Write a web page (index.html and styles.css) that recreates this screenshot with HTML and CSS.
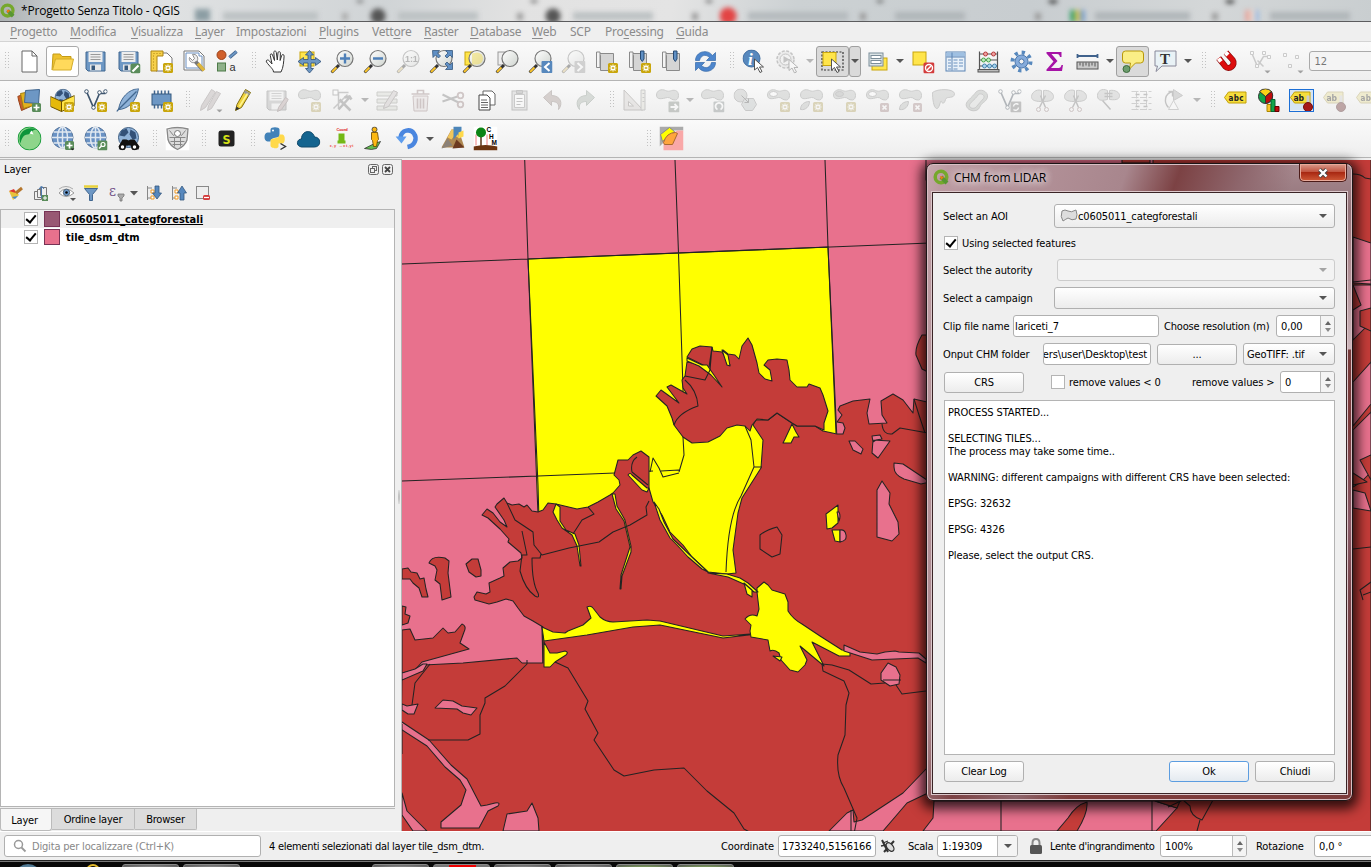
FILE: index.html
```html
<!DOCTYPE html>
<html lang="it">
<head>
<meta charset="utf-8">
<title>*Progetto Senza Titolo - QGIS</title>
<link rel="stylesheet" href="styles.css">
</head>
<body>
<svg class="defs" aria-hidden="true">
<defs>
<linearGradient id="gy" x1="0" y1="0" x2="0" y2="1"><stop offset="0" stop-color="#fff3a0"/><stop offset="1" stop-color="#f6dc3c"/></linearGradient>
<linearGradient id="gl" x1="0" y1="0" x2="1" y2="1"><stop offset="0" stop-color="#fff"/><stop offset="1" stop-color="#cfd4cf"/></linearGradient>
<g id="star"><rect x="13.500" y="13.500" width="10" height="10" rx="1.500" fill="#c9a60c"/><path d="M18.500 15v7M15 18.500h7M16 16l5 5M21 16l-5 5" stroke="#fff" stroke-width="1.100"/><circle cx="18.500" cy="18.500" r="1" fill="#c9a60c"/></g>
<g id="plus"><rect x="14.500" y="14.500" width="9" height="9" rx="1.500" fill="#5a8c5a"/><path d="M19 16v6M16 19h6" stroke="#fff" stroke-width="1.700"/></g>
<g id="cross"><rect x="14.500" y="14.500" width="9" height="9" rx="1.500" fill="#c08080"/><path d="M17 17l4 4M21 17l-4 4" stroke="#fff" stroke-width="1.700"/></g>
<g id="lens"><path d="M8.500 15.500L1 23" stroke="#333" stroke-width="3"/><path d="M6 18l-4.500 4.500" stroke="#fcc62c" stroke-width="2"/><circle cx="14.500" cy="9" r="8" fill="url(#gl)" stroke="#777" stroke-width="1.200"/></g>
<g id="disk"><path d="M2.500 2.500h19v19h-17l-2-2z" fill="#6d97c4" stroke="#41668f"/><rect x="5" y="2.500" width="14" height="10" fill="#eee"/><path d="M7 5h10M7 7.500h10M7 10h10" stroke="#999"/><rect x="6.500" y="15" width="11" height="6" fill="#e8e8e8"/><rect x="8" y="16" width="3.500" height="4.500" fill="#37587c"/></g>
<g id="blob"><path d="M1 6.500C1 2 6 0 10 2c4 2 6-1 10 0 4 1 4 9 0 9.500-4 .5-5-3-8-2.500C7 10 1 12 1 6.500z" fill="#b9beb9" stroke="#888c88"/></g>
<g id="cursor"><path d="M0 0v11l3-2.500 2.500 5 2-1-2.500-4.500h4z" fill="#fff" stroke="#444" stroke-width=".9"/></g>
<g id="globe"><circle cx="12" cy="11" r="10.500" fill="#6a92c4" stroke="#54749b"/><path d="M3 5.500h18M1.500 11h21M3 16.500h18M12 .5v21" stroke="#dfe7f0" stroke-width="1.500"/><ellipse cx="12" cy="11" rx="5" ry="10.500" fill="none" stroke="#dfe7f0" stroke-width="1.500"/></g>
<g id="world"><circle cx="12" cy="11" r="10" fill="#8fb2d8" stroke="#3d5d80"/><path d="M5 4l5-2 2 4-4 4-5-1zM14 3l5 3 1 6-4 1-3-5zM7 13l5 1-1 6z" fill="#335178"/></g>
<g id="book"><path d="M3 4h16v17H6V6z" fill="#d5d5d5" stroke="#8a8a8a"/><path d="M2 2.500h3.500v15.500H2z" fill="#f4f4f4" stroke="#8a8a8a"/></g>
<g id="q"><circle cx="8" cy="8" r="5.800" fill="none" stroke="#75a82c" stroke-width="3.500"/><path d="M8 8l6 6" stroke="#589632" stroke-width="4"/><path d="M7 7l4 1-3 3z" fill="#ee7913"/></g>
</defs>
<symbol id="new" viewBox="0 0 24 24"><path d="M4.500 1.500h10l5 5v16h-15z" fill="#fff" stroke="#666"/><path d="M14.500 1.500v5h5" fill="none" stroke="#666"/></symbol>
<symbol id="open" viewBox="0 0 24 24"><path d="M1.500 20.500l1-16h7l2 2.500h9v3" fill="#eec22e" stroke="#c49b16"/><path d="M2 20.500l3-11h18l-2.500 11z" fill="#ffd95b" stroke="#d4ad2b"/></symbol>
<symbol id="save" viewBox="0 0 24 24"><use href="#disk"/></symbol>
<symbol id="saveas" viewBox="0 0 24 24"><use href="#disk"/><rect x="14" y="14" width="10" height="10" rx="2" fill="#5a8c5a"/><path d="M16 22l6-6" stroke="#fff" stroke-width="2.200"/></symbol>
<symbol id="layout" viewBox="0 0 24 24"><path d="M6.500 3.500h11l5 5v13h-16z" fill="#fff" stroke="#777"/><path d="M1.500 1.500h12v5h-6v15h-6z" fill="#f6d04a" stroke="#ad8512"/><path d="M4 6v14M4 4h8" stroke="#ad8512" stroke-dasharray="1 2"/><use href="#star"/></symbol>
<symbol id="layman" viewBox="0 0 24 24"><path d="M1.500 1.500h15l5 5v14h-20z" fill="#fff" stroke="#777"/><path d="M3.500 3.500h13v3h3v12h-16z" fill="none" stroke="#6a8fc0"/><path d="M12 11l9 10" stroke="#777" stroke-width="4"/><path d="M15.500 14l6 7" stroke="#dfb63c" stroke-width="3.400"/><path d="M7 8l3 3 2-2-2-4c4-1 6 3 5 6l-3 2c-3 1-6-2-5-5z" fill="#eee" stroke="#777" stroke-width=".8"/></symbol>
<symbol id="style" viewBox="0 0 24 24"><circle cx="6" cy="5.500" r="4.500" fill="#d0602b" stroke="#9c4219"/><path d="M14 8l7-6" stroke="#3d5f88" stroke-width="3.600"/><path d="M14 8l7-6" stroke="#6d97c4" stroke-width="2"/><rect x="2" y="13.500" width="8" height="8" fill="#8fb18a" stroke="#4d7a48"/><text x="14" y="21" font-family="Liberation Sans" font-size="11" fill="#333">a</text></symbol>
<symbol id="pan" viewBox="0 0 24 24"><path d="M9 22.500c0-3-4-5.500-7-10-1-2 1.500-2.800 3-1l2.500 3L5.800 6c-.3-2 1.700-2.300 2.200-.5l2 5.500L9.300 3c0-2 2.300-2 2.500 0l1 7.500L13.500 3.300c.2-1.800 2.400-1.500 2.400.3L15.600 11l1.600-5c.5-1.600 2.600-1.100 2.400.7-.5 6-.6 11-3.100 15.800z" fill="#fff" stroke="#333"/></symbol>
<symbol id="pansel" viewBox="0 0 24 24"><rect x="2.500" y="2.500" width="14" height="14" fill="#ffe54b" stroke="#c9a60c"/><path d="M12 1l4 4.500h-2.500V10H18V8l5.500 4-5.500 4v-2.500h-4.500V19H16l-4 4.500L8 19h2.500v-5.500H6V16L.5 12 6 8v2h4.500V5.500H8z" fill="#6d97c4" stroke="#2f5179" stroke-width=".8"/></symbol>
<symbol id="zin" viewBox="0 0 24 24"><use href="#lens"/><path d="M14.500 4v10M9.500 9h10" stroke="#4f80b8" stroke-width="2.400"/></symbol>
<symbol id="zout" viewBox="0 0 24 24"><use href="#lens"/><path d="M9.500 9h10" stroke="#4f80b8" stroke-width="2.400"/></symbol>
<symbol id="z11" viewBox="0 0 24 24"><use href="#lens"/><text x="8.500" y="12.500" font-family="Liberation Sans" font-size="9" font-weight="bold" fill="#555">1:1</text></symbol>
<symbol id="zfull" viewBox="0 0 24 24"><use href="#lens"/><path d="M3 1h7L8 3.500l3 3-2 2-3-3L3.500 8zM23 1h-7l2.500 2.500-3 3 2 2 3-3L23 8zM23 20h-7l2.500-2.500-3-3 2-2 3 3L23 13z" fill="#5f8fc4" stroke="#35587f" stroke-width=".8"/></symbol>
<symbol id="zsel" viewBox="0 0 24 24"><rect x="2.500" y="2.500" width="12" height="13" fill="#ffe54b" stroke="#c9a60c"/><use href="#lens"/><path d="M14.500 3a6 6 0 010 12h-5V4z" fill="#f1e06c" opacity=".6"/></symbol>
<symbol id="zlay" viewBox="0 0 24 24"><rect x="2.500" y="2.500" width="12" height="13" fill="#eee" stroke="#999"/><use href="#lens"/></symbol>
<symbol id="zlast" viewBox="0 0 24 24"><use href="#lens"/><rect x="13" y="11.500" width="11" height="12" rx="1" fill="#5788bd"/><path d="M21 13.500l-4.500 4 4.500 4" fill="none" stroke="#fff" stroke-width="2"/></symbol>
<symbol id="znext" viewBox="0 0 24 24"><use href="#lens"/><rect x="13" y="11.500" width="11" height="12" rx="1" fill="#999"/><path d="M16 13.500l4.500 4-4.500 4" fill="none" stroke="#fff" stroke-width="2"/></symbol>
<symbol id="bm1" viewBox="0 0 24 24"><use href="#book"/><use href="#star"/></symbol>
<symbol id="bm2" viewBox="0 0 24 24"><use href="#book"/><path d="M13 1.500h3.500v8l-1.700 2.500-1.800-2.500z" fill="#5f8fc4" stroke="#274a73"/><use href="#star"/></symbol>
<symbol id="bm3" viewBox="0 0 24 24"><use href="#book"/><path d="M13 1.500h3.500v8l-1.700 2.500-1.800-2.500z" fill="#5f8fc4" stroke="#274a73"/></symbol>
<symbol id="refresh" viewBox="0 0 24 24"><path d="M2 11c0-9 12-12 17-5l3-3v8h-9l3-3c-4-4-9-2-10 3z" fill="#4d86cd" stroke="#3568a8" stroke-width=".7"/><path d="M22 13c0 9-12 12-17 5l-3 3v-8h9l-3 3c4 4 9 2 10-3z" fill="#4d86cd" stroke="#3568a8" stroke-width=".7"/></symbol>
<symbol id="info" viewBox="0 0 24 24"><circle cx="9" cy="9" r="8.500" fill="#5788bd" stroke="#3f6ca0"/><text x="5.500" y="15" font-family="Liberation Serif" font-size="17" font-style="italic" font-weight="bold" fill="#fff">i</text><use href="#cursor" transform="translate(12 9.500)"/></symbol>
<symbol id="act" viewBox="0 0 24 24"><circle cx="10" cy="10" r="8.500" fill="#ddd" stroke="#777" stroke-width="1.500" stroke-dasharray="3 1.500"/><circle cx="10" cy="10" r="5.500" fill="#eee" stroke="#777"/><path d="M8 6.500l6 3.500-6 3.500z" fill="#777"/><use href="#cursor" transform="translate(13.500 10)"/></symbol>
<symbol id="select" viewBox="0 0 24 24"><rect x="1.500" y="2.500" width="21" height="18" fill="none" stroke="#333" stroke-width="1.200" stroke-dasharray="2 1.500"/><rect x="2.500" y="3" width="13" height="13" fill="#ffe54b" stroke="#c9a60c"/><use href="#cursor" transform="translate(11 9.500)"/></symbol>
<symbol id="form" viewBox="0 0 24 24"><rect x="6.500" y="8.500" width="15" height="12" fill="#ffe54b" stroke="#c9a60c"/><rect x="3.500" y="3.500" width="14" height="13" fill="#dce4e6" stroke="#7b8d99"/><rect x="5.500" y="6" width="10" height="3" fill="#fff" stroke="#7b8d99"/><rect x="5.500" y="11" width="10" height="3" fill="#fff" stroke="#7b8d99"/></symbol>
<symbol id="desel" viewBox="0 0 24 24"><rect x="2.500" y="2.500" width="13" height="13" fill="#ffe54b" stroke="#c9a60c"/><rect x="13" y="13" width="11" height="11" rx="1.500" fill="#d33c3c"/><circle cx="18.500" cy="18.500" r="3.500" fill="none" stroke="#fff" stroke-width="1.400"/><path d="M16.500 20.500l4-4" stroke="#fff" stroke-width="1.400"/></symbol>
<symbol id="table" viewBox="0 0 24 24"><rect x="2.500" y="2.500" width="19" height="19" fill="#e9f1f9" stroke="#5a83b3"/><path d="M3 3h18v4H3z" fill="#9fc0e2"/><path d="M3 7.500h18M8.500 3v18" stroke="#5a83b3"/><path d="M4.500 10.500h3M10 10.500h4M15.500 10.500h4M4.500 13.500h3M10 13.500h4M15.500 13.500h4M4.500 16.500h3M10 16.500h4M15.500 16.500h4M4.500 19.500h3M10 19.500h4" stroke="#6a92c0" stroke-width="1.200"/></symbol>
<symbol id="abacus" viewBox="0 0 24 24"><path d="M3 2v19M21 2v19M3 4.500h18M3 10.500h18M3 16.500h18" stroke="#555" fill="none" stroke-width="1.200"/><rect x="1.500" y="20" width="21" height="2.500" fill="#bbb" stroke="#555"/><g stroke-width=".9"><g fill="#f0a0a0" stroke="#b03030"><circle cx="9" cy="4.500" r="2"/><circle cx="17" cy="4.500" r="2"/></g><g fill="#bdeebd" stroke="#3d9a3d"><circle cx="7" cy="10.500" r="2"/><circle cx="12" cy="10.500" r="2"/></g><g fill="#a8d4ee" stroke="#3a7ba8"><circle cx="8" cy="16.500" r="2"/><circle cx="13" cy="16.500" r="2"/><circle cx="18" cy="16.500" r="2"/></g></g></symbol>
<symbol id="gear" viewBox="0 0 24 24"><circle cx="12" cy="12" r="9" fill="none" stroke="#5788bd" stroke-width="4" stroke-dasharray="3.200 3.850"/><circle cx="12" cy="12" r="6.500" fill="#85abdb" stroke="#4d79ae"/><circle cx="12" cy="12" r="2.500" fill="#f2f2f2" stroke="#4d79ae"/></symbol>
<symbol id="sigma" viewBox="0 0 24 24"><path d="M4 2.500h15v5h-1.500c-.5-2-1-3-3-3H9l6 7-6.500 7H16c2 0 2.500-1 3-3h1.500l-1 6H4V20l7-8-7-8z" fill="#a613a6"/></symbol>
<symbol id="measure" viewBox="0 0 24 24"><path d="M2 6.500h20M2 4.500v4M22 4.500v4" stroke="#40628c" stroke-width="1.800"/><rect x="1.500" y="12.500" width="21" height="7" fill="#c9c9c9" stroke="#555"/><path d="M4.500 13v3M7.500 13v4M10.500 13v3M13.500 13v4M16.500 13v3M19.500 13v4" stroke="#555"/></symbol>
<symbol id="tip" viewBox="0 0 24 24"><path d="M5 1.500h15q3 0 3 3v6q0 3-3 3h-5l-6 6 1-6H5q-3 0-3-3v-6q0-3 3-3z" fill="#fbee86" stroke="#b8980a"/><circle cx="6" cy="19.500" r="3.500" fill="#6d9d6d" stroke="#3d6b3d"/></symbol>
<symbol id="textann" viewBox="0 0 24 24"><path d="M1.500 1.500h21v15h-14l-6 5.500 1.500-5.500H1.500z" fill="#e9f2f6" stroke="#889"/><text x="6.500" y="14" font-family="Liberation Serif" font-size="15" font-weight="bold" fill="#333">T</text></symbol>
<symbol id="magnet" viewBox="0 0 24 24"><path d="M4 9l7 8c4 4 11-2 7-7l-7-7" transform="rotate(3 12 12)" fill="none" stroke="#8b0d0d" stroke-width="6"/><path d="M4 9l7 8c4 4 11-2 7-7l-7-7" transform="rotate(3 12 12)" fill="none" stroke="#dd0d0d" stroke-width="4.600"/><path d="M4 9l2.500 3M11 3l2.500 2.500" stroke="#fff" stroke-width="4.200"/></symbol>
<symbol id="vee" viewBox="0 0 24 24"><path d="M3 3l7 16 6-14h6" fill="none" stroke="#3e556e" stroke-width="1.700"/><g fill="#fff" stroke="#3e556e"><circle cx="3" cy="3" r="1.800"/><circle cx="10" cy="19" r="1.800"/><circle cx="16" cy="4" r="1.800"/><circle cx="22" cy="3" r="1.800"/></g></symbol>
<symbol id="snapv" viewBox="0 0 24 24"><path d="M4 3l6 14 6-10h6M10 11l6 6" fill="none" stroke="#888" stroke-width="1.500"/><path d="M3 2h3v3H3zM15 2h3v3h-3zM20 6h3v3h-3zM8 15h3v3H8z" fill="#fff" stroke="#888"/><path d="M17 21h6l-3 3z" fill="#222"/></symbol>
<symbol id="dots" viewBox="0 0 24 24"><path d="M3 4h3v3H3zM15 6h3v3h-3zM8 15h3v3H8z" fill="#fff" stroke="#888"/><path d="M17 21h6l-3 3z" fill="#222"/></symbol>
<symbol id="src" viewBox="0 0 24 24"><path d="M0 8l8-3 5 13-9 4z" fill="#c9602b" stroke="#96401a"/><path d="M3 5l10-2 3 14-10 3z" fill="#e2b11e" stroke="#a5800f"/><path d="M8 2l14-1-1 14-14-1z" fill="#6d97c4" stroke="#41668f"/><use href="#plus"/></symbol>
<symbol id="gpkg" viewBox="0 0 24 24"><use href="#world" transform="translate(3 0) scale(.8)"/><path d="M0 8l11 5v10L0 18z" fill="#e5b90c" stroke="#6b5200"/><path d="M24 7l-13 6v10l13-6z" fill="#ffe54b" stroke="#6b5200"/><use href="#star"/></symbol>
<symbol id="shp" viewBox="0 0 24 24"><use href="#vee"/><use href="#star"/></symbol>
<symbol id="spat" viewBox="0 0 24 24"><path d="M22 0C12 1 4 9 2 21c8 0 18-7 20-21z" fill="#8fb2d8" stroke="#41668f"/><path d="M20 3L0 23" stroke="#41668f" stroke-width="1.200"/><use href="#star"/></symbol>
<symbol id="mem" viewBox="0 0 24 24"><path d="M5 2v18M8.500 2v18M12 2v18M15.500 2v18M19 2v18" stroke="#41668f" stroke-width="1.500"/><rect x="2.500" y="5.500" width="19" height="11" fill="#6d97c4" stroke="#35587f"/><use href="#star"/></symbol>
<symbol id="pens" viewBox="0 0 24 24"><path d="M2 22l1-5L13 1l4 2.500L7 19zM9 22l1-5L18 3l4 2-9 15z" fill="#bba5a5" stroke="#8c7c7c"/><path d="M18 21h6l-3 3z" fill="#222"/></symbol>
<symbol id="pen" viewBox="0 0 24 24"><path d="M4 22l1.500-6L14 1l5 3-9 15z" fill="#efd23c" stroke="#7d6a10"/><path d="M13 3l5 3" stroke="#999" stroke-width="3"/><path d="M16 5L8 18" stroke="#fff48f" stroke-width="1.500"/><path d="M4 22l1-4 3 2z" fill="#333"/></symbol>
<symbol id="savee" viewBox="0 0 24 24"><path d="M2.500 2.500h19v19h-17l-2-2z" fill="#aaa" stroke="#777"/><path d="M5 3h14v9H5zM7 15h10v6H7z" fill="#eee"/><path d="M7 5h10M7 7.500h10M7 10h10" stroke="#999"/><path d="M13 23l1-4 7-10 3 2-7 10z" fill="#c79b9b" stroke="#866"/></symbol>
<symbol id="bstar" viewBox="0 0 24 24"><use href="#blob"/><use href="#star"/></symbol>
<symbol id="ring" viewBox="0 0 24 24"><use href="#blob"/><ellipse cx="7" cy="5.500" rx="4" ry="2.500" fill="#fff" stroke="#888"/><use href="#star"/></symbol>
<symbol id="ringf" viewBox="0 0 24 24"><use href="#blob"/><ellipse cx="7" cy="5.500" rx="4" ry="2.500" fill="#a5aaa5" stroke="#888"/><use href="#star"/></symbol>
<symbol id="ringx" viewBox="0 0 24 24"><use href="#blob"/><ellipse cx="7" cy="5.500" rx="4" ry="2.500" fill="#fff" stroke="#888"/><use href="#cross"/></symbol>
<symbol id="part" viewBox="0 0 24 24"><use href="#blob"/><path d="M1 21c0-5 4-8 9-8 0 5-4 9-9 8z" fill="#b9beb9" stroke="#888"/><use href="#star"/></symbol>
<symbol id="partx" viewBox="0 0 24 24"><use href="#blob"/><path d="M1 21c0-5 4-8 9-8 0 5-4 9-9 8z" fill="#b9beb9" stroke="#888"/><use href="#cross"/></symbol>
<symbol id="move" viewBox="0 0 24 24"><use href="#blob"/><rect x="13" y="13" width="11" height="11" rx="1" fill="#7a8a7a"/><path d="M15 18.500h7M19 15.500l3 3-3 3" fill="none" stroke="#fff" stroke-width="1.800"/></symbol>
<symbol id="rot" viewBox="0 0 24 24"><use href="#blob"/><rect x="13" y="13" width="11" height="11" rx="1" fill="#7a8a8a"/><path d="M17 21a3.500 3.500 0 113 0" fill="none" stroke="#fff" stroke-width="1.800"/></symbol>
<symbol id="simp" viewBox="0 0 24 24"><circle cx="7" cy="7" r="6.500" fill="#b9beb9" stroke="#888"/><path d="M11 10h9l3 6-4 6h-7l-4-6z" fill="#b9c4c4" stroke="#888"/><path d="M8 7l7 7m0-4v4h-4" fill="none" stroke="#555"/></symbol>
<symbol id="resh" viewBox="0 0 24 24"><path d="M1 4c5-4 21-4 22 1 0 6-8 2-9 6s-3 5-4 2-2 8-5 7S1 10 1 4z" fill="#b9beb9" stroke="#888"/></symbol>
<symbol id="offs" viewBox="0 0 24 24"><path d="M12 3c6-4 14 2 10 8-3 4-4 2-7 8-2 5-11 4-13-1S7 10 12 3z" fill="#aab5aa" stroke="#888"/><path d="M14 6c3-2 7 1 5 4l-7 8c-2 3-7 2-7-1s5-5 9-11z" fill="#d5dad5" stroke="#888"/></symbol>
<symbol id="vtx" viewBox="0 0 24 24"><path d="M3 4h5m0 0v16M8 4l10 0M3 20L17 6" fill="none" stroke="#888" stroke-width="1.500"/><rect x="2.500" y="1.500" width="5" height="5" fill="#fff" stroke="#777"/><path d="M9 11l11 11M19 9l-11 12M14 9l5-1 2 3" stroke="#777" stroke-width="2.500" fill="none"/></symbol>
<symbol id="rows" viewBox="0 0 24 24"><path d="M1.500 3.500h20v4h-20zM1.500 10.500h20v4h-20zM1.500 17.500h20v4h-20z" fill="#d4d8c8" stroke="#8c9080"/><path d="M8 20l1-4L18 2l4 2-9 14z" fill="#ccc0c0" stroke="#877"/></symbol>
<symbol id="trash" viewBox="0 0 24 24"><path d="M4.500 7.500h15l-1 15h-13z" fill="#ead9d9" stroke="#a77"/><path d="M3 5.500h18M9 5V2h6v3M9 10v10M12 10v10M15 10v10" fill="none" stroke="#a77" stroke-width="1.600"/></symbol>
<symbol id="cut" viewBox="0 0 24 24"><path d="M1 6l16 8M1 13l15-5" stroke="#777" stroke-width="2"/><circle cx="19" cy="7" r="2.800" fill="none" stroke="#a77" stroke-width="1.800"/><circle cx="19" cy="16" r="2.800" fill="none" stroke="#a77" stroke-width="1.800"/></symbol>
<symbol id="copy" viewBox="0 0 24 24"><path d="M8.500 2.500h9l3 3v11h-12z" fill="#fff" stroke="#666"/><path d="M4.500 6.500h8l3 3v12h-11z" fill="#fff" stroke="#444"/><path d="M6.500 11.500h6M6.500 14h7M6.500 16.500h7M6.500 19h7" stroke="#666"/></symbol>
<symbol id="paste" viewBox="0 0 24 24"><rect x="4.500" y="2.500" width="15" height="19" fill="#ccc" stroke="#777"/><path d="M7 6h10v13H7z" fill="#fff" stroke="#888"/><path d="M9 2h6v3H9zM9 10h6M9 13h6M9 16h4" stroke="#777" fill="#999"/></symbol>
<symbol id="undo" viewBox="0 0 24 24"><path d="M3 9l8-7v5c9 0 12 8 7 14 1-5-1-8-7-8v4z" fill="#b39184" stroke="#8f776d"/></symbol>
<symbol id="redo" viewBox="0 0 24 24"><path d="M21 9l-8-7v5C4 7 1 15 6 21c-1-5 1-8 7-8v4z" fill="#9db3a0" stroke="#7a9480"/></symbol>
<symbol id="cad" viewBox="0 0 24 24"><path d="M1.500 1.500v20h19zM6 13v4.500h5z" fill="#d8cfc8" fill-rule="evenodd" stroke="#887c74"/><path d="M18.500 1.500h4v20h-4zM20 5h2M20 9h2M20 13h2" fill="#dddcc8" stroke="#888"/></symbol>
<symbol id="vtool" viewBox="0 0 24 24"><use href="#vee"/><rect x="13" y="13" width="11" height="11" rx="1" fill="#777"/><path d="M16 18a3 3 0 015-2M21 19a3 3 0 01-5 2" stroke="#fff" stroke-width="1.400" fill="none"/></symbol>
<symbol id="split" viewBox="0 0 24 24"><path d="M11 2v11c-8 0-10-2-10-5s4-8 10-6zM13 2v11c8 0 10-2 10-5s-4-7-10-6z" fill="#c0c4c0" stroke="#888"/><path d="M9 19l6-12M15 19L10 7" stroke="#777" stroke-width="1.500"/><circle cx="8" cy="21" r="2" fill="none" stroke="#a77"/><circle cx="16" cy="21" r="2" fill="none" stroke="#a77"/></symbol>
<symbol id="merge" viewBox="0 0 24 24"><path d="M11 2v9c-8 2-10 0-10-4s4-8 10-5zM13 2v9c8 1 10-1 10-4s-4-6-10-5z" fill="#c0c4c0" stroke="#888"/><path d="M8 5h8M8 8h8M6 12l8 9" stroke="#777" stroke-width="1.500"/></symbol>
<symbol id="align" viewBox="0 0 24 24"><path d="M2 3h20M2 9h20M2 15h20M2 21h20M7 3v18M17 3v18" stroke="#999" fill="none" stroke-dasharray="7 1.500"/><path d="M6 6h4M14 6h4M6 12h4M14 12h4M6 18h4M14 18h4" stroke="#777" stroke-width="1.500"/></symbol>
<symbol id="rotf" viewBox="0 0 24 24"><path d="M10 3C2 5 1 14 6 19M6 3h4v5" fill="none" stroke="#777" stroke-width="1.400"/><path d="M11 1l9 6-9 5z" fill="#aaa" stroke="#888"/><path d="M11 12l5 9H6z" fill="#fff" stroke="#999"/></symbol>
<symbol id="abc" viewBox="0 0 24 24"><path d="M5 3.500h17.500v11H5L1 9z" fill="#f6dd3c" stroke="#c2a008"/><text x="5" y="12" font-family="DejaVu Sans" font-size="8" font-weight="bold" fill="#222" textLength="15">abc</text></symbol>
<symbol id="pie" viewBox="0 0 24 24"><circle cx="9" cy="8" r="7" fill="#12a548" stroke="#333"/><path d="M9 8L3 3a8 8 0 0112 0z" fill="#fcd116" stroke="#333"/><path d="M9 8l6-5c3 5 0 11-6 12z" fill="#c00d0d" stroke="#333"/><path d="M10.500 16h4v7h-4z" fill="#fcc62c" stroke="#a80"/><path d="M14.500 11h4v12h-4z" fill="#12a548" stroke="#063"/><path d="M18.500 18h4v5h-4z" fill="#c00d0d" stroke="#600"/></symbol>
<symbol id="abpin" viewBox="0 0 24 24"><path d="M5 3.500h15.500v11H5L1 9z" fill="#f6dd3c" stroke="#c2a008"/><text x="4" y="12" font-family="DejaVu Sans" font-size="8.500" font-weight="bold" fill="#222">ab</text><path d="M18.500 7v9" stroke="#ccc" stroke-width="3"/><circle cx="18.500" cy="18.500" r="4.500" fill="#a61919" stroke="#701010"/></symbol>
<symbol id="qring" viewBox="0 0 24 24"><circle cx="12" cy="12" r="11.500" fill="#8ed58b" stroke="#1a9c3c"/><path d="M3 17C-1 8 8-2 19 3c-5 0-5 5-9 5s-6 4-7 9z" fill="#0d953a"/><path d="M12 7l2-3 2 4z" fill="#fff"/></symbol>
<symbol id="globep" viewBox="0 0 24 24"><use href="#globe"/><use href="#plus"/><path d="M20 22h4l-2 2z" fill="#222"/></symbol>
<symbol id="globez" viewBox="0 0 24 24"><use href="#globe"/><rect x="14" y="14" width="10" height="10" rx="1.500" fill="#5a8c5a"/><circle cx="19.500" cy="18" r="2" fill="none" stroke="#fff" stroke-width="1.200"/><path d="M18 19.500l-2.500 2.500" stroke="#fff" stroke-width="1.400"/></symbol>
<symbol id="bino" viewBox="0 0 24 24"><use href="#world"/><path d="M6 13h4l2 1 2-1h4l5 7-1 3h-6l-2-4h-4l-2 4H3l-1-3z" fill="#111"/><circle cx="6" cy="20.500" r="2.500" fill="#fff" stroke="#111" stroke-width="1.500"/><circle cx="18" cy="20.500" r="2.500" fill="#fff" stroke="#111" stroke-width="1.500"/></symbol>
<symbol id="shield" viewBox="0 0 24 24"><path d="M0 0h24v24H0z" fill="#fff"/><path d="M1.500 2.500q10-3 21 0l-1 11q-2 6-9.500 9.500Q4 19 2.500 13z" fill="#ddd" stroke="#888" stroke-width="1.300"/><path d="M4 11h16M5 15h14M7 18h10M4 4l4 5 4-4 4 4 4-5M9 11v9M15 11v9" fill="none" stroke="#888"/><circle cx="12" cy="7" r="3" fill="#fff" stroke="#777"/></symbol>
<symbol id="scp" viewBox="0 0 24 24"><rect x="4" y="4" width="16" height="16" rx="2.500" fill="#222"/><text x="8" y="17" font-family="DejaVu Sans" font-size="13" font-weight="bold" fill="#d4e117" textLength="8" lengthAdjust="spacingAndGlyphs">S</text></symbol>
<symbol id="py" viewBox="0 0 24 24"><path d="M7 6V3c0-3 9-3 9 0v6c0 3-9 1-9 6H4c-4 0-4-9 0-9h8" fill="#4282b8"/><path d="M15 17v3c0 3-8 2-8-1v-5c0-3 9-1 9-6h3c3 0 3 9 0 9h-7" fill="#ffd94a"/><circle cx="9.500" cy="4" r="1" fill="#fff"/><path d="M17 17l5 3-5 3" fill="none" stroke="#333" stroke-width="1.400"/></symbol>
<symbol id="cloud" viewBox="0 0 24 24"><path d="M5 20.500c-6-1-5-8 0-8 0-9 11-10 13-2 7 0 7 10 0 10z" fill="#14648f" stroke="#124a6b"/></symbol>
<symbol id="coord" viewBox="0 0 24 24"><text x="7" y="4" font-family="Liberation Sans" font-size="4" font-weight="bold" fill="#d11">Coord</text><path d="M9 7h6v7h1v3H8v-3h1z" fill="#74b816"/><text x="0" y="20" font-family="Liberation Sans" font-size="4" font-weight="bold" fill="#e44" textLength="24">x,y →xt,yt</text></symbol>
<symbol id="sv" viewBox="0 0 24 24"><path d="M2 22l10-5 6-2-4 7-5 1z" fill="#64bd4f" stroke="#222" stroke-width=".7"/><circle cx="12" cy="3" r="2.500" fill="#fcb813" stroke="#333" stroke-width=".8"/><path d="M9 6h6l1 7-1 1-1 6h-3l-1-6-1-1z" fill="#fcb813" stroke="#664400" stroke-width=".8"/></symbol>
<symbol id="turn" viewBox="0 0 24 24"><path d="M5 11C6 3 15 2 18.500 7s1 12-6.500 13.500" fill="none" stroke="#4a86df" stroke-width="4.500"/><path d="M0 10h11l-5 7z" fill="#5e9ded"/></symbol>
<symbol id="mount" viewBox="0 0 24 24"><path d="M1 21L11 3h7l6 18z" fill="#ae8852"/><path d="M7 11l4-8 5 1 3 8-5-3-3 4z" fill="#f2c65b"/><path d="M12 22l4-9 8 8z" fill="#6c3a20"/><path d="M13 0h8v8h-4l-4 5z" fill="#4d86b9"/><path d="M18 6l5-2v6l-5 2z" fill="#ffd94a"/><path d="M1 22l6-10 5 7z" fill="#8b8177"/></symbol>
<symbol id="chm" viewBox="0 0 24 24"><path d="M0 0h24v24H0z" fill="#fff"/><path d="M2.500 8v11M13.500 8v11" stroke="#ef8080"/><path d="M7.500 10v10" stroke="#5b3214" stroke-width="1.500"/><circle cx="7.500" cy="6" r="5" fill="#0c8414"/><path d="M0 20q12-3 24 0v4H0z" fill="#6b3410"/><g font-family="Liberation Sans" font-size="6.500" font-weight="bold"><text x="13" y="5.500">C</text><text x="15.500" y="12">H</text><text x="18" y="18.500">M</text></g></symbol>
<symbol id="poly" viewBox="0 0 24 24"><path d="M0 0h24v4H10v6L0 20z" fill="#aaa"/><path d="M4 24V12L18 4h6v20z" fill="#f9a8a8"/><path d="M1 8l9-7 5 4L3 15z" fill="#ff0" stroke="#888"/><path d="M4 16q3-10 12-10l2 1-5 11H5z" fill="#ffa53d" stroke="#aa6930"/></symbol>
</svg>

<header class="title">
 <svg class="qlogo" viewBox="0 0 17 17"><use href="#q"/></svg><span>*Progetto Senza Titolo - QGIS</span>
 <div class="glass"><i class="sq"></i><i></i><i></i><i class="red"></i><i class="none"></i><i class="drive"></i><i class="goog"></i></div>
</header>
<nav class="menu">
 <span style="width:60px"><u>P</u>rogetto</span><span style="width:61px"><u>M</u>odifica</span><span style="width:64px"><u>V</u>isualizza</span><span style="width:41px"><u>L</u>ayer</span><span style="width:83px">Impostazioni</span><span style="width:53px"><u>P</u>lugins</span><span style="width:52px">Vett<u>o</u>re</span><span style="width:46px"><u>R</u>aster</span><span style="width:62px"><u>D</u>atabase</span><span style="width:38px"><u>W</u>eb</span><span style="width:35px">SCP</span><span style="width:71px">Pro<u>c</u>essing</span><span><u>G</u>uida</span>
</nav>

<div class="bar">
 <b class="grip first"></b>
 <svg class="i"><use href="#new"/></svg><svg class="i box"><use href="#open"/></svg><svg class="i"><use href="#save"/></svg><svg class="i"><use href="#saveas"/></svg><svg class="i"><use href="#layout"/></svg><svg class="i"><use href="#layman"/></svg><svg class="i"><use href="#style"/></svg>
 <b class="grip"></b>
 <svg class="i"><use href="#pan"/></svg><svg class="i"><use href="#pansel"/></svg><svg class="i"><use href="#zin"/></svg><svg class="i"><use href="#zout"/></svg><svg class="i off"><use href="#z11"/></svg><svg class="i"><use href="#zfull"/></svg><svg class="i"><use href="#zsel"/></svg><svg class="i"><use href="#zlay"/></svg><svg class="i"><use href="#zlast"/></svg><svg class="i off"><use href="#znext"/></svg><svg class="i"><use href="#bm1"/></svg><svg class="i"><use href="#bm2"/></svg><svg class="i"><use href="#bm3"/></svg><svg class="i"><use href="#refresh"/></svg>
 <b class="grip"></b>
 <svg class="i"><use href="#info"/></svg><svg class="i off"><use href="#act"/></svg><b class="drop off"></b>
 <svg class="i press"><use href="#select"/></svg><b class="drop press"></b>
 <svg class="i"><use href="#form"/></svg><b class="drop"></b>
 <svg class="i"><use href="#desel"/></svg><svg class="i"><use href="#table"/></svg><svg class="i"><use href="#abacus"/></svg><svg class="i"><use href="#gear"/></svg><svg class="i"><use href="#sigma"/></svg><svg class="i"><use href="#measure"/></svg><b class="drop"></b>
 <svg class="i press"><use href="#tip"/></svg><svg class="i"><use href="#textann"/></svg><b class="drop"></b>
 <b class="grip"></b>
 <svg class="i"><use href="#magnet"/></svg><svg class="i off"><use href="#snapv"/></svg><svg class="i off"><use href="#dots"/></svg><span class="tol">12</span>
</div>
<div class="bar">
 <b class="grip first"></b>
 <svg class="i"><use href="#src"/></svg><svg class="i"><use href="#gpkg"/></svg><svg class="i"><use href="#shp"/></svg><svg class="i"><use href="#spat"/></svg><svg class="i"><use href="#mem"/></svg>
 <b class="grip"></b>
 <svg class="i off"><use href="#pens"/></svg><svg class="i"><use href="#pen"/></svg><svg class="i off"><use href="#savee"/></svg><svg class="i off"><use href="#bstar"/></svg><svg class="i off"><use href="#vtx"/></svg><b class="drop off"></b>
 <svg class="i off"><use href="#rows"/></svg><svg class="i off"><use href="#trash"/></svg><svg class="i off"><use href="#cut"/></svg><svg class="i"><use href="#copy"/></svg><svg class="i off"><use href="#paste"/></svg><svg class="i off"><use href="#undo"/></svg><svg class="i off"><use href="#redo"/></svg>
 <b class="grip"></b>
 <svg class="i off"><use href="#cad"/></svg><svg class="i off"><use href="#move"/></svg><b class="drop off"></b>
 <svg class="i off"><use href="#rot"/></svg><svg class="i off"><use href="#simp"/></svg><svg class="i off"><use href="#ring"/></svg><svg class="i off"><use href="#part"/></svg><svg class="i off"><use href="#ringf"/></svg><svg class="i off"><use href="#ringx"/></svg><svg class="i off"><use href="#partx"/></svg><svg class="i off"><use href="#resh"/></svg><svg class="i off"><use href="#offs"/></svg><svg class="i off"><use href="#vtool"/></svg><svg class="i off"><use href="#split"/></svg><svg class="i off"><use href="#split"/></svg><svg class="i off"><use href="#merge"/></svg><svg class="i off"><use href="#align"/></svg><svg class="i off"><use href="#rotf"/></svg><b class="drop off"></b>
 <b class="grip"></b>
 <svg class="i"><use href="#abc"/></svg><svg class="i"><use href="#pie"/></svg><svg class="i frame"><use href="#abpin"/></svg><svg class="i off"><use href="#abpin"/></svg><svg class="i off"><use href="#abc"/></svg>
</div>
<div class="bar third">
 <b class="grip first"></b>
 <svg class="i"><use href="#qring"/></svg><svg class="i"><use href="#globep"/></svg><svg class="i"><use href="#globez"/></svg><svg class="i"><use href="#bino"/></svg>
 <b class="grip"></b><svg class="i"><use href="#shield"/></svg>
 <b class="grip"></b><svg class="i"><use href="#scp"/></svg>
 <b class="grip"></b>
 <svg class="i"><use href="#py"/></svg><svg class="i"><use href="#cloud"/></svg><svg class="i"><use href="#coord"/></svg><svg class="i"><use href="#sv"/></svg><svg class="i"><use href="#turn"/></svg><b class="drop"></b><svg class="i"><use href="#mount"/></svg><svg class="i"><use href="#chm"/></svg>
 <b class="grip wide"></b><svg class="i"><use href="#poly"/></svg>
</div>

<main>
 <aside>
  <div class="phead"><span>Layer</span><svg width="25" height="12"><g fill="none" stroke="#666"><rect x=".5" y=".5" width="10" height="10" rx="2"/><rect x="4.500" y="2.500" width="4" height="4"/><rect x="2.500" y="4.500" width="4" height="4" fill="#efefef"/><rect x="14.500" y=".5" width="10" height="10" rx="2"/><path d="M17 3l5 5M22 3l-5 5" stroke="#444" stroke-width="1.800"/></g></svg></div>
  <svg class="ptools" width="230" height="20" viewBox="0 183 230 20">
   <path d="M9 191l6-1 4 5-6 5z" fill="#e8c23c"/><path d="M9 191l5-2 2 4z" fill="#d33"/><path d="M12 197l3 2 3-3z" fill="#48c"/><path d="M16 193l6-5" stroke="#b5762c" stroke-width="3"/>
   <g fill="#efefef" stroke="#777"><path d="M34.500 191.500h7v8h-7z"/><path d="M37.500 189.500h7v8h-7z"/><path d="M40.500 187.500h6v8h-6z"/></g><path d="M41.500 198v-11M39 189l2.500-3 2.500 3" fill="none" stroke="#4c79ad"/><rect x="42" y="195" width="6" height="6" fill="#5a8c5a"/><path d="M45 196v4M43 198h4" stroke="#fff"/>
   <path d="M59 193q7-8 15 0-8 7-15 0z" fill="#fff" stroke="#999"/><circle cx="66.500" cy="192.500" r="3.200" fill="#6b9bd0" stroke="#567"/><circle cx="66.500" cy="192.500" r="1.300"/><path d="M59 189q7-5 14 0" fill="none" stroke="#aaa"/><path d="M70 198h6l-3 3z" fill="#555"/>
   <path d="M84.500 188.500h13l-5 6v6h-3v-6z" fill="#6d97c4" stroke="#41668f"/><path d="M84 186.500h14" stroke="#e8d23c" stroke-width="2.500"/>
   <text x="109" y="196" font-family="DejaVu Serif" font-size="15" fill="#725287">ε</text><path d="M118 194h6v2l-2 2v3h-2v-3l-2-2z" fill="#aaa" stroke="#777" stroke-width=".8"/><path d="M130 191h8l-4 4.500z" fill="#555"/>
   <path d="M147.500 186v14M148 188h4M148 198h4" stroke="#888"/><path d="M151 190h3v3h-3zM151 196h3v3h-3z" fill="#fff" stroke="#f29a23"/><path d="M155 186h4v7h2.500l-4.500 6-4.500-6h2.500z" fill="#5788bd" stroke="#35587f" stroke-width=".8"/>
   <path d="M172.500 186v14M173 188h4M173 198h4" stroke="#888"/><path d="M175 190h3v3h-3zM175 196h3v3h-3z" fill="#fff" stroke="#f29a23"/><path d="M180 200h4v-7h2.500l-4.500-7-4.500 7h2.500z" fill="#5788bd" stroke="#35587f" stroke-width=".8"/>
   <rect x="196.500" y="186.500" width="12" height="12" fill="#eee" stroke="#888"/><rect x="203" y="195" width="7" height="5" rx="1.500" fill="#d33c3c"/><path d="M204 197.500h5" stroke="#fff" stroke-width="1.200"/>
  </svg>
  <div class="tree">
   <div class="lay cur"><b class="chk"></b><b class="sw purple"></b><span class="cat">c0605011_categforestali</span></div>
   <div class="lay"><b class="chk"></b><b class="sw pink"></b><span>tile_dsm_dtm</span></div>
  </div>
  <div class="tabs"><span class="on">Layer</span><span>Ordine layer</span><span>Browser</span></div>
 </aside>
 <svg class="map" viewBox="402 160 969 671" width="969" height="671">
  <g class="r">
  <path class="p" d="M400 150h980v690H400z"/>
  <path class="y" d="M528 259L828 247 837 440 770 680 544 668z"/>
  <path class="f" d="M524.700 160L528 259 538 485 543 665M675 160L678.500 253 683 388 683 437 684 455 679 472M825 160L828 247 836 433M402 264L528 259 930 243M402 481L538 476 615 473 653 471M661 471L679 470"/>
  <!-- forest body -->
  <path d="M402 677L415 672 424 665 463 663 517 658 522 663 543 663V627L533 621 524 616 518 608 513 601 506 599 497 602 489 604 475 600 474 597 477 592 486 594 490 592 489 583 500 578 504 576 503 568 510 562 518 561 522 558 521 553 508 542 509 539 500 529 488 518 482 515 487 509 493 513 500 522 507 527 504 520 495 507 497 504 504 498 507 503 512 505 519 504 524 507 527 505 532 511 538 512 543 510 548 503 556 504 577 509 588 507 598 502 610 495 613 493 620 485 619 480 614 475 618 460 628 460 633 455 641 451 649 457V488L653 502 662 515 670 532 683 545 692 557 708 572 727 574 736 573 733 550 738 513 742 498 761 468 763 440 753 425 756 420 768 420 777 413 792 423 797 426 815 426 823 431 837 434 843 434 845 428 843 423 837 422 842 415 838 410 840 406 853 401 870 399 867 413 869 424 887 423 882 415 881 401 893 394 903 400 913 413 914 399 940 405V150H1371V840H400z"/>
  <path class="p" d="M926 150h227v30H926z"/>
  <!-- upper crest -->
  <path d="M674 425L672 418 667 406 656 396 661 390 679 403 667 387 671 385 687 394 683 388 682 380 685 376 687 362 703 365 687 357 692 349 700 346 712 347 713 351 722 352 730 365 723 350 728 354 735 355 739 359 742 346 748 338 752 345 757 363 759 373 765 379 772 381 770 370 764 365 768 360 777 359 787 360 789 370 790 380 797 387 807 387 809 384 820 388 823 395 828 411 824 423 824 430 815 426 797 426 792 423 777 413 768 420 757 419 752 425 750 431 745 426 737 425 727 428 720 436 708 442 692 443 683 437z"/>
  <path d="M922 335q-7 12-6 20l6 14 10 5V335zM402 569l6-1 3 4 6 1 3 6 4-1 2 11 2 8-6 0-3-9-6-5-3-4-8 0zM429 563q3-8 16-5l4 3-1 12 3 24-9 3-2-16-5-4 2-10-2-4zM466 564l6-5 6 0 3 11 0 6-5 1-7-5zM402 606l4 1-1 7 5 2-2 7-6 2zM402 630l8-1 5 11 18-2 10-10 5 5 7-1 7-8q5 2 2 8l-4 11 9 6-47 13-7 8-13 3z"/>
  <!-- selected clearings -->
  <g class="y">
   <path d="M542 627l11 5 12 1 3-2 15-6 8-7-4-11q4-2 6 1l7 9q6 5 13 5l34-2 13 1 63 15 42-3-42 5-63-13-27 2-46 8-43 6zM544 642l6 11 7 0 8-2q4 1 1 4l-11 7-5 5h-6zM556 504l-3 8 4 8 5 8 10 7 5 11 3 20 1 0-2-21-4-11-9-4-6-9 0-14zM612 494l4 15 8 12 6 26-9 28-1 14 1 0 1-13 9-24 0-6-6-26-8-14-2-12zM628 475q2-3 4 0l15 13 2 0-2 4-5-2z"/>
   <path d="M687 358l15 7 5 0 7 10 8 12-11-12-12-9-12-5zM722 350l6 5 2 11-3-1zM792 424l4 8 3 5-5 0-3 6-8 0 2-4zM757 592l0-4 7-6 4 3 4 5 13 4 3 8 0 9q5 8 14 13l18 12 22 14 8 1v5h-11l-27-14 12 24-24-20 7 14-2 5-7 7-8-2-9-10-2-7q-5-4-9-2l-2-11-17-3-1-6 1-6-6-6q5-6 12-3l2-7z"/>
   <path d="M744 583l8 7v7l-5-3zM773 656l9 1-2 4zM826 514l12-9 0 18-6 5-5 1zM832 530l8 0 0 12-5-1zM727 574l13 4 8 5 10 9-4 0-8-7-18-8-20-4zM654 502l5 7 5 13 9 17 20 19 15 14-6-3-14-12-11-12-7-7-10-18z"/>
  </g>
  <!-- open ground -->
  <g class="p">
   <path d="M849 441l6 0 8 8-2 5-8-4zM872 436l8-1 2 4-6 1-3 2zM873 440l17 1-12 17-6-5zM894 463l9 1 15 10 12 8-9 2-17-5q-10-4-10-12zM877 490l5-9 8 12-1 11 9 18 1 12-7 7-15-4 0-36zM840 530q5-1 6 5t-6 7zM839 512q2 4 0 9l-2-9zM844 645l16 7 17 2 8-2 10-1 4 1 20 1 7 6v4l-8-5-46 2-28-9zM881 673l7-10 8 4 4 8-1 9-9 2-9-6z"/>
   <path d="M435 708l8-8 10 1 9 5 15 2-6 7-8-2-6-4zM402 704l5 2 11-2-4 10-6 0-6-4zM402 722l27 18 22 25 16 14 14 27 6-1 8-2q6-1 3 3l-10 5-9 17h-38v-6l20-17 5-15-6-10-15-13-18-21-28-18zM402 793l5 18 20 20h-14l-11-16zM503 831l4-17 20-3 5-8 6 15 1 13zM829 831l18-18 6-3 1 12 8-2 41-27 25-26v26l-21 10-24 28z"/>
   <path d="M923 831l10-13 1-17h221l22 7-21 23zM402 673l13-4 8-5h4l-4 7-21 9z"/>
   <path d="M1353 237l18 6v41l-18-1zM1353 285h18v37l-18 18 0-30 8-5zM1353 382l18-20v42l-18 22zM1353 430l18-18v60l-10 10-8 5zM1353 490l12 3 6 18-18-3z"/>
  </g>
  <g>
   <path d="M1057 831l11-13q8-13 19-16 1 11-10 29zM1360 311l11-3v23l-11-5zM1360 460l11-5v25zM1353 473l14 9-14 3zM1155 801h25l-3 7zM1122 150h28v13h-28z"/>
   <path class="f" d="M507 503l8 17 18 12 1 13 8 10 27-7 30-6 14-10 17-7 17-10-1-8 3-6M522 531l5 24h-5l-2 16q5 18 15 25 5 3 3-3-6-10-6-35l8 0 1-4M588 507l6 7-12 6-9 14M674 425q4-12 24-19-1-16-13-26M685 376l20 4 5-10 2-23M712 347l-3 20M650 472l3-14 6 10 4 9 16-4M745 426l6 14 3 27-13 29q-13 20-15 76M754 467h8M637 457q-7 5-5 15l16 13"/>
   <path class="f" d="M760 535q6-5 17-8l5 8-2 19-8 3-12-8zM822 664l10 1 17 5 22 14 14-1M896 685l6 9 24-3M822 664l1 7 21 10 5 12-3 12-1 30-7 20q-2 20 6 33l13 30-3 16M555 662l13 6 20 33-3 8 13 24-4 7 20 30 10 6 30-6 30-2 23 23 27 22 10 16 13 7M851 810v21M402 724v30M428 740h40l12-6v-19l5-12 0-5 20-12 22-22v-4M430 664l-15 19-3 22"/>
   <path class="f" d="M883 680h18M882 424q1 11 10 10l8-6 28 5M914 399l5 16 6 18M1001 801v30M1152 801v30M1168 807l15-7 7 6q0 10 12 14l11-20M1200 820l-3 11M1353 174q8 0 12 4l6 1M1353 282l18-2M1353 549l18-2M1363 600l-3-10 11-8M1363 595l8-3"/>
  </g>
  </g>
 </svg>
</main>

<footer class="status">
 <div class="search"><svg width="14" height="14"><circle cx="5.500" cy="5.500" r="4" fill="none" stroke="#999" stroke-width="1.500"/><path d="M8.500 8.500l4 4" stroke="#999" stroke-width="1.800"/></svg>Digita per localizzare (Ctrl+K)</div>
 <span class="msg">4 elementi selezionati dal layer tile_dsm_dtm.</span>
 <span class="w57">Coordinate</span><div class="fld coordf">1733240,5156166</div>
 <svg class="ext" width="17" height="17" viewBox="0 0 17 17"><path d="M2 2l6 12M14 3L4 14" stroke="#333" stroke-width="2"/><ellipse cx="10" cy="9" rx="3" ry="5" transform="rotate(-40 10 9)" fill="#ddd" stroke="#333" stroke-width="1.300"/><path d="M3 5l5-2M1 8l5-1" stroke="#333" stroke-width="1.300"/></svg>
 <span class="w29">Scala</span><div class="fld scale">1:19309<b class="sep"></b></div>
 <svg class="lock" width="14" height="17" viewBox="0 0 14 17"><path d="M3.500 8V5q0-4 3.500-4t3.500 4v3" fill="none" stroke="#888" stroke-width="2"/><rect x="1" y="7" width="12" height="9" rx="1.500" fill="#555"/></svg>
 <span class="w110">Lente d'ingrandimento</span><div class="fld zoom">100%<b class="spin"></b></div>
 <span class="w58">Rotazione</span><div class="fld rotv">0,0 °</div>
</footer>
<div class="task"><i class="orb"></i><i class="ie"></i><i class="t"></i><i class="t"></i><i style="width:124px"></i><i class="t"></i><i class="t r"></i><i class="t"></i><i class="t"></i><i class="t g"></i><i class="t g"></i></div>

<section class="dlg">
 <div class="dtitle"><svg width="17" height="17" viewBox="0 0 17 17"><use href="#q"/></svg><span>CHM from LIDAR</span><div class="close"><svg width="12" height="10" viewBox="0 0 12 10"><path d="M2.500 1.500l7 7M9.500 1.500l-7 7" stroke="#444" stroke-width="4"/><path d="M2.500 1.500l7 7M9.500 1.500l-7 7" stroke="#fff" stroke-width="2.400"/></svg></div></div>
 <div class="dbody">
  <div class="row h24"><span class="lab">Select an AOI</span><div class="combo"><svg width="18" height="14" viewBox="0 0 18 14"><path d="M2 2q3-2 6 0t8-1q2 5 0 9-4 2-8-1-2 1-5 3Q0 8 2 2z" fill="#ddd" stroke="#888"/></svg><span>c0605011_categforestali</span></div></div>
  <div class="row chkrow"><b class="chk"></b><span>Using selected features</span></div>
  <div class="row m9"><span class="lab l2">Select the autority</span><div class="combo dis"></div></div>
  <div class="row m6"><span class="lab">Select a campaign</span><div class="combo"></div></div>
  <div class="row m6"><span class="lab l3">Clip file name</span><div class="fld clip">lariceti_7</div><span class="res">Choose resolution (m)</span><div class="fld sp1">0,00<b class="spin"></b></div></div>
  <div class="row m6"><span class="lab l4">Onput CHM folder</span><div class="fld path"><span>ers\user\Desktop\test</span></div><button class="dots">...</button><div class="combo geo"><span>GeoTIFF: .tif</span></div></div>
  <div class="row m6"><button>CRS</button><b class="chk c2"></b><span class="rv">remove values &lt; 0</span><span class="rv2">remove values &gt;</span><div class="fld sp2">0<b class="spin"></b></div></div>
  <div class="log">PROCESS STARTED...<br><br>SELECTING TILES...<br>The process may take some time..<br><br>WARNING: different campaigns with different CRS have been selected:<br><br>EPSG: 32632<br><br>EPSG: 4326<br><br>Please, select the output CRS.</div>
  <div class="row btns"><button>Clear Log</button><button class="ok">Ok</button><button>Chiudi</button></div>
 </div>
</section>
</body>
</html>
```
FILE: styles.css
```css
*{box-sizing:border-box}
body{margin:0;width:1371px;height:867px;overflow:hidden;position:relative;display:flex;flex-direction:column;background:#efefef;color:#000;font:11px/13px "DejaVu Sans Condensed","DejaVu Sans",sans-serif;font-stretch:condensed;letter-spacing:-.12px;white-space:nowrap}
.defs{position:absolute;width:0;height:0}
i{font-style:normal}
.title{height:22px;flex:none;display:flex;align-items:center;position:relative;overflow:hidden;background:linear-gradient(100deg,#aaafb1 0,#d5d9db 6%,#dfe1e2 13%,#d0d4d6 28%,#e2e2e2 38%,#e4e4e4 49%,#ccd1d3 58%,#c8cdd0 75%,#d4d7d8 88%,#c9ced0);border-bottom:1px solid #5c5c5e;font:12px "Open Sans",sans-serif;letter-spacing:-.17px}
.title>span{margin-left:5px;position:relative;z-index:1}
.qlogo{width:16px;height:16px;position:relative;z-index:1}
.glass{position:absolute;inset:0;display:flex;padding-left:195px;filter:blur(2.500px)}
.glass i{width:175px;height:34px;flex:none;background:radial-gradient(circle at 8px 16px,#555 7px,transparent 8px),linear-gradient(#bcc1c3,#bcc1c3) 28px 12px/80px 8px no-repeat,linear-gradient(#999,#999) 147px 13px/6px 7px no-repeat,radial-gradient(circle at 164px -2px,#444 4px,transparent 5px)}
.glass .sq{background:linear-gradient(#8b9da3,#8b9da3) 0 9px/15px 12px no-repeat,linear-gradient(#bcc1c3,#bcc1c3) 28px 12px/95px 8px no-repeat,linear-gradient(#aaa,#aaa) 147px 13px/6px 7px no-repeat,radial-gradient(circle at 165px -2px,#555 4px,transparent 5px)}
.glass .red{background:radial-gradient(circle at 8px 16px,#e24444 8px,transparent 9px),linear-gradient(#b4babd,#b4babd) 28px 12px/100px 8px no-repeat,linear-gradient(#999,#999) 140px 13px/6px 7px no-repeat,radial-gradient(circle at 160px -2px,#444 4px,transparent 5px)}
.glass .none{background:linear-gradient(#b0b6b9,#b0b6b9) 0 12px/70px 8px no-repeat,linear-gradient(#999,#999) 140px 13px/6px 7px no-repeat,radial-gradient(circle at 158px -2px,#222 5px,transparent 6px)}
.glass .drive{background:linear-gradient(90deg,#3ba26d 5px,#d8c35a 5px 10px,#7ba0cc 10px) 0 10px/15px 12px no-repeat,linear-gradient(#b0b6b9,#b0b6b9) 25px 12px/95px 8px no-repeat,linear-gradient(#999,#999) 142px 13px/6px 7px no-repeat,radial-gradient(circle at 160px -2px,#222 5px,transparent 6px)}
.glass .goog{background:linear-gradient(90deg,#e5a8a0 5px,#e8d8d0 5px 10px,#9dbbe2 10px) 0 10px/14px 12px no-repeat,linear-gradient(#b0b6b9,#b0b6b9) 25px 12px/80px 8px no-repeat}
.menu{height:20px;flex:none;display:flex;align-items:center;padding-left:10px;color:#8b8b8b;border-bottom:1px solid #d4d4d4;background:#efefef;font:12px "Noto Sans",sans-serif;letter-spacing:-.25px}
.menu span{flex:none}
.menu u{text-underline-offset:2px;text-decoration-thickness:1px}
.bar{height:39px;flex:none;display:flex;align-items:center;background:linear-gradient(#fafafa,#eee);border-bottom:1px solid #b4b4b4;overflow:hidden}
.third{height:38px}
.i{width:33px;height:31px;padding:3.500px 4.500px;flex:none;overflow:visible}
.off{opacity:.38;filter:saturate(.45)}
.box{background:#fff;border:1px solid #aaa;border-radius:3px;padding:2.500px 3.500px}
.press{background:#dadada;border:1px solid #a0a0a0;border-radius:3px}
.i.press{padding:2.500px 3.500px}
.frame{background:linear-gradient(#d6e4f4,#d6e4f4) center/24px 20px no-repeat;outline:1px solid #1c6fd6;outline-offset:-5px}
.grip{width:16px;height:18px;flex:none;background:linear-gradient(90deg,#c2c2c2 1px,transparent 1px) 0 0/3px 3px;background-clip:content-box;background-origin:content-box;padding:0 4px 0 8px;-webkit-mask:linear-gradient(#000 1px,transparent 1px) 0 0/100% 3px}
.grip.first{width:12.500px;padding-left:4.500px}
.grip.wide{width:153px;padding-left:145px}
.drop{width:12px;height:31px;flex:none;display:flex;align-items:center;justify-content:center}
.drop::before{content:"";border:4px solid transparent;border-top:4px solid #555;border-bottom:0}
.tol{width:80px;height:20px;flex:none;border:1px solid #aaa;border-radius:3px;padding:3px 5px;color:#777;background:#f4f4f4}
main{height:673px;flex:none;display:flex;padding-top:2px}
aside{width:402px;height:672px;margin-top:-1px;flex:none;display:flex;flex-direction:column;border-top:1px solid #b8b8b8;border-right:1px solid #b4b4b4;background:radial-gradient(#aaa,transparent) 398px 330px/2px 14px no-repeat}
.phead{height:19px;flex:none;display:flex;justify-content:space-between;align-items:center;padding:0 8px 0 4px}
.ptools{margin:4px 0 6px;display:block;flex:none}
.tree{width:395px;height:598px;flex:none;border:1px solid #b4b4b4;background:#fff}
.lay{height:18px;display:flex;align-items:center;padding-left:23px;font-weight:bold;letter-spacing:.01px}
.cur{background:#efefef}
.cat{text-decoration:underline}
.chk{width:14px;height:14px;flex:none;border:1px solid #b4b4b4;background:#fff;display:flex;align-items:center;justify-content:center}
.chk::before{content:"";width:4px;height:8px;border:solid #000;border-width:0 2px 2px 0;transform:translateY(-1px) rotate(40deg)}
.sw{width:16px;height:16px;margin:0 6px;flex:none;border:1px solid #735}
.purple{background:#985873}.pink{background:#e8718d}
.tabs{display:flex;height:23px;flex:none;align-items:flex-start;border-top:1px solid #b8b8b8;width:395px;margin-top:1px}
.tabs span{height:21px;padding:4px 0 0;text-align:center;width:83px;background:#dcdcdc;border:1px solid #bbb;border-width:0 1px 1px 0;border-radius:0 0 2px 0}
.tabs .on{width:52px;height:22px;padding:5px 3px 0 0;background:#f6f6f6;border-left-width:1px;border-radius:0 0 3px 3px}
.tabs span:last-child{width:62px}
.tabs{letter-spacing:-.2px}
.map{display:block;flex:none}
.map path{stroke:#232323;stroke-width:1.050;stroke-linejoin:round;fill:#c43c39}
.map .p path,.map path.p{fill:#e8718d}
.map .y path,.map path.y{fill:#ff0}
.map path.f{fill:none}
.status{height:29px;flex:none;display:flex;align-items:center;padding-left:4px;border-top:1px solid #fff;letter-spacing:-.28px}
.status>*{flex:none}
.search,.fld,.combo,button{border:1px solid #b0b0b0;border-radius:3px;background:#fff;height:22px;display:flex;align-items:center;position:relative;flex:none}
.search{width:257px;color:#888;padding-left:8px;gap:5px;margin-right:8px;letter-spacing:-.18px}
.msg{width:452px}
.w57{width:57px;letter-spacing:-.12px}.w29{width:29px}.w110{width:110px;letter-spacing:-.38px}.w58{width:58px;letter-spacing:-.1px}
.fld{padding-left:4px;overflow:hidden;letter-spacing:-.12px}
.coordf{width:98px;padding-left:3px}.ext{margin:0 11px 0 4px}
.scale{width:81px}.lock{margin:0 7px 0 11px}.zoom{width:87px;margin-right:9px}.rotv{width:80px}
.sep,.spin{margin-left:auto;height:100%;border-left:1px solid #bbb;background:#f4f4f4;display:flex;align-items:center;justify-content:center}
.sep{width:20px}
.sep::before,.combo::after{content:"";border:4px solid transparent;border-top:4.500px solid #555;border-bottom:0}
.spin{width:14px;flex-direction:column;gap:3px}
.spin::before,.spin::after{content:"";border:3.500px solid transparent}
.spin::before{border-bottom:4px solid #666;border-top:0}
.spin::after{border-top:4px solid #888;border-bottom:0}
.task{flex:1;background:#080808;border-top:1px solid #222;display:flex;gap:4px;box-shadow:inset 0 1px #777;padding-top:3px;overflow:hidden}
.task i{flex:none}
.task .orb{width:28px;height:28px;margin-left:14px;border-radius:50%;background:radial-gradient(#9cc4dc,#27506b)}
.task .ie{width:14px;height:14px;margin:0 18px 0 40px;border:2px solid #e2b92c;border-radius:50%}
.task .t{width:57px;height:8px;background:radial-gradient(#999,#555);border:1px solid #888;border-radius:3px}
.task .r{background:linear-gradient(90deg,#777 15px,#e00 15px 42px,#777 42px)}
.task .g{background:radial-gradient(#8ab55c,#555)}
.dlg{position:absolute;left:926px;top:163px;width:427px;height:638px;border:1px solid #1c1516;border-radius:7px;box-shadow:inset 0 0 0 1px #d8bfc4,0 3px 12px 5px rgba(0,0,0,.75);padding:0 5px 6px;background:linear-gradient(110deg,#c8aab0 0,#bc9ba2 20px,#a8868d 190px,#7c4244 240px,#8e666c 300px,transparent 350px),linear-gradient(#a88a90 0,#927379 45px,#a78389 80px,#cbb5ba 185px,#763b3b 186px,#7b3a3b 260px,#895b68 360px,#76444a 430px,#7d3c3b)}
.dtitle{height:28px;padding:0 0 2px 1px;display:flex;align-items:center;font:12px "Open Sans",sans-serif;letter-spacing:-.15px;position:relative}
.dtitle span{margin-left:4px;text-shadow:0 0 8px #fff,0 0 8px #fff}
.close{position:absolute;right:0;top:0;width:48px;height:18px;border:1px solid #4c1b18;border-top:0;border-radius:0 0 5px 5px;background:linear-gradient(#d99a8c,#c0513c 48%,#a82812 50%,#cf5a38);box-shadow:inset 0 0 0 1px #e8a999;display:flex;align-items:center;justify-content:center}
.dbody{height:602px;background:#efefef;border:1px solid #3a2426;outline:1px solid #dcc8cb;padding:11px 11px 0 10px;display:flex;flex-direction:column}
.row{display:flex;align-items:center;height:22px;flex:none}
.h24{height:24px}.m9{margin-top:9px}.m6{margin-top:6px}
.chkrow{height:14px;margin-top:8px;gap:4px;padding-left:1px}
.lab{width:111px;flex:none}
.l2{width:114px}.l3{width:70px}.l4{width:100px}
.combo{flex:1;background:linear-gradient(#fff,#ececec);padding:0 7px 0 5px}
.combo::after{margin-left:auto}
.h24 .combo{height:24px}
.dis{border-color:#ccc;background:#f3f3f3}
.dis::after{opacity:.5}
.clip{width:146px;padding-left:1px}
.res{width:112px;margin-left:5px;flex:none;letter-spacing:-.18px}
.sp1{flex:1}
.path{width:108px;justify-content:flex-end;padding-right:3px}
button{font:inherit;letter-spacing:inherit;font-stretch:inherit;width:80px;height:21px;justify-content:center;padding:0;margin-left:1px;background:linear-gradient(#fff,#ececec);color:#000}
.dots{margin:0 6px}
.geo{padding-left:3px}
.c2{margin-left:27px}.c2::before{display:none}
.rv{width:123px;margin-left:4px;flex:none}.rv2{width:88px;flex:none}
.sp2{flex:1}
.log{height:355px;flex:none;margin:7px 0 0 1px;border:1px solid #b4b4b4;background:#fff;padding:5px 3px}
.btns{margin-top:5px}
.btns .ok{margin-left:auto;margin-right:5px;border-color:#5c9de0;background:linear-gradient(#fff,#e4eaf0)}
```
